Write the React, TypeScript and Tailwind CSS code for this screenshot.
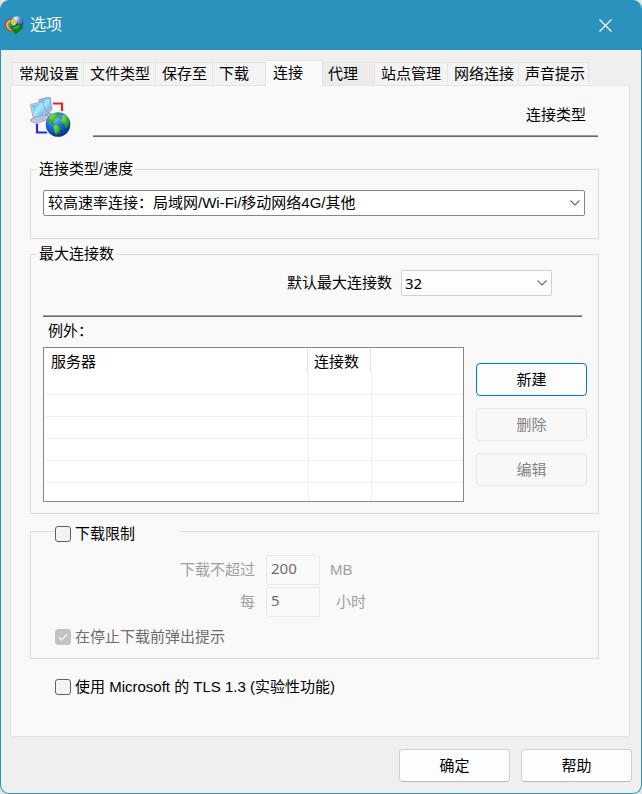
import { useState } from "react";
import type { ReactNode } from "react";

const tabs = [
  { label: "常规设置", width: "w-[71px]" },
  { label: "文件类型", width: "w-[72px]" },
  { label: "保存至", width: "w-[57px]" },
  { label: "下载", width: "w-[53px]" },
  { label: "连接", width: "w-[58px]" },
  { label: "代理", width: "w-[52px]" },
  { label: "站点管理", width: "w-[73px]" },
  { label: "网络连接", width: "w-[71px]" },
  { label: "声音提示", width: "w-[70px]" },
];

function AppLogo() {
  return (
    <svg viewBox="0 0 20 20" className="size-5 shrink-0" aria-hidden="true">
      <defs>
        <radialGradient id="logoBall" cx="0.4" cy="0.2" r="0.8">
          <stop offset="0" stopColor="#f0f4ff" />
          <stop offset="0.4" stopColor="#6a8fdc" />
          <stop offset="1" stopColor="#1c3a8c" />
        </radialGradient>
      </defs>
      <path d="M9 4C4 3.500 1 6.500 1.500 10.500c.5 3 3.500 5 7.500 5" fill="none" stroke="#d8401e" strokeWidth="1.600" />
      <path d="M9 5.500C5 5 2.600 8 3 10.500c.5 2 3 3.800 6 3.800" fill="none" stroke="#f6d02a" strokeWidth="1.600" />
      <path d="M9 7C6 7 4.300 8.500 4.500 10.500c.3 1.500 2 2.500 4.500 2.500" fill="none" stroke="#4ab84a" strokeWidth="1.500" />
      <circle cx="13" cy="7.500" r="6.500" fill="url(#logoBall)" />
      <path d="M7.500 5l3-1 2 2-.5 3-2.500 2-2.500-2.500z" fill="#d9cf3c" />
      <path d="M5.500 12.500l6.500-1.500 1.500-2.500 5.500 4-7.500 6.500-1-3z" fill="#108a14" stroke="#064d09" strokeWidth="0.600" />
      <path d="M8 12.800l5-1.200 1.200-1.600 1.500 1-3.700 2.500z" fill="#45c63a" />
    </svg>
  );
}

function ConnectionArt() {
  return (
    <svg viewBox="0 0 41 41" className="size-[41px] shrink-0" aria-hidden="true">
      <defs>
        <linearGradient id="screen" x1="0" y1="0" x2="1" y2="1">
          <stop offset="0" stopColor="#3fb4f4" />
          <stop offset="0.5" stopColor="#a8ecff" />
          <stop offset="1" stopColor="#4aa8f0" />
        </linearGradient>
        <radialGradient id="globe" cx="0.35" cy="0.25" r="0.8">
          <stop offset="0" stopColor="#8fd0ff" />
          <stop offset="0.45" stopColor="#1f74dc" />
          <stop offset="1" stopColor="#062a78" />
        </radialGradient>
        <radialGradient id="land" cx="0.35" cy="0.25" r="0.9">
          <stop offset="0" stopColor="#6fe04c" />
          <stop offset="1" stopColor="#0d7a1c" />
        </radialGradient>
      </defs>
      <path d="M23 6.500h9v7.500" fill="none" stroke="#d42a2a" strokeWidth="2.200" />
      <path d="M7 27v8.500h10" fill="none" stroke="#2c2cd8" strokeWidth="2.200" />
      <path d="M9 2.500L20 0l2 12.500-3 3-8-1z" fill="#a9b4da" stroke="#7f8bb8" strokeWidth="0.700" />
      <path d="M10.500 3.500L19 1.500l1.500 10-8 2z" fill="url(#screen)" />
      <path d="M12 18l8-2 4 2-3 3-7 1z" fill="#b9bddb" stroke="#7379a4" strokeWidth="0.700" />
      <path d="M0.500 7.500L13 4.500l3 13.500-12.500 4z" fill="#ccd4ec" stroke="#7f8bb8" strokeWidth="0.700" />
      <path d="M2 8.500L12 6l2.500 11-10 3z" fill="url(#screen)" />
      <path d="M0.500 22.500l4-2 10-2.500 4.500 2-1 2-11 4.500-6-2z" fill="#d3d6ea" stroke="#7379a4" strokeWidth="0.700" />
      <path d="M3 23l11-3M5 24.500l11-3.500" stroke="#8a90b8" strokeWidth="0.600" />
      <circle cx="28" cy="27.500" r="12.300" fill="url(#globe)" />
      <path d="M18 22c2-4 6-6.500 10.500-6.300l1 1.800-2 1 1.500 1.500-3.500 2-1 2.500-2 .5 2 2.500-1 1-4-3.500-1.500 1z" fill="url(#land)" />
      <path d="M31 18l4-.5c3 2.500 4.500 5.500 4.500 9.500l-2 4-2.500-.5-.5-3.500-3.500-1-1-3 2.500-2z" fill="url(#land)" />
      <path d="M23 28l3.500-.5 4 3-1 4.500-3 3-2-2.500z" fill="url(#land)" />
    </svg>
  );
}

function Chevron() {
  return (
    <svg viewBox="0 0 12 8" className="pointer-events-none absolute right-[4px] top-1/2 h-2 w-3 -translate-y-1/2" aria-hidden="true">
      <path d="M1.500 1.500L6 6l4.500-4.500" fill="none" stroke="#6a6a6a" strokeWidth="1.100" />
    </svg>
  );
}

function Rule() {
  return <div className="h-[2px] border-t border-[#a0a0a0] bg-[#696969]" />;
}

function PushButton({ children, primary, disabled }: { children: ReactNode; primary?: boolean; disabled?: boolean }) {
  const look = primary
    ? "border-[#0078d4] bg-[#fdfdfd]"
    : disabled
      ? "border-[#e8e8e8] bg-[#f8f8f8] text-[#838383]"
      : "border-[#d0d0d0] border-b-[#bababa] bg-[#fdfdfd]";
  return (
    <button type="button" disabled={disabled} className={`h-[33px] w-[111px] rounded-[4px] border ${look}`}>
      {children}
    </button>
  );
}

function CheckBox({ id, checked, disabled, onChange, children }: {
  id: string;
  checked: boolean;
  disabled?: boolean;
  onChange?: () => void;
  children: ReactNode;
}) {
  return (
    <div className="flex items-center gap-[4px]">
      <span className="relative flex size-4 shrink-0">
        <input
          id={id}
          type="checkbox"
          checked={checked}
          disabled={disabled}
          onChange={onChange}
          className="size-4 appearance-none rounded-[3px] border border-[#606060] bg-[#f3f3f3] checked:bg-[#0067c0] disabled:border-[#c3c3c3] disabled:bg-[#c3c3c3]"
        />
        {checked && (
          <svg viewBox="0 0 16 16" className="pointer-events-none absolute inset-0 size-4" aria-hidden="true">
            <path d="M4 8.500l2.500 2.500L12 5.500" fill="none" stroke="#fff" strokeWidth="1.200" />
          </svg>
        )}
      </span>
      <label htmlFor={id} className={disabled ? "text-[#6d6d6d]" : ""}>{children}</label>
    </div>
  );
}

export default function App() {
  const [limit, setLimit] = useState(false);
  const [tls, setTls] = useState(false);
  const limitInput =
    "ml-[11px] h-[30px] w-[54px] rounded-[2px] border border-[#ebebeb] bg-[#fafafa] px-1 pb-[5px] font-['Noto_Sans'] text-[15px] text-[#6d6d6d]";

  return (
    <div className="bg-[#e4e4e4] font-['Liberation_Sans','Noto_Sans_CJK_SC',sans-serif] text-[15px] leading-[18px] text-black">
      <div className="overflow-hidden rounded-[9px] border-x border-b border-[#2992bd] bg-[#efefef]">
        <header className="flex h-[50px] items-center bg-[#2992bd] pl-[3px] pr-[29px] text-white">
          <AppLogo />
          <h1 className="ml-[6px] flex-1 text-[16px]">选项</h1>
          <button type="button" aria-label="关闭" className="size-[13px]">
            <svg viewBox="0 0 13 13" className="size-[13px]" aria-hidden="true">
              <path d="M0.500 0.500l12 12M12.500 0.500l-12 12" stroke="#fff" strokeWidth="1.200" />
            </svg>
          </button>
        </header>

        <main className="pl-[9px] pr-[11px] pt-[10px]">
          <div role="tablist" className="flex items-end pl-[2px]">
            {tabs.map((tab, i) => {
              const active = tab.label === "连接";
              return (
                <button
                  key={tab.label}
                  type="button"
                  role="tab"
                  aria-selected={active}
                  className={`shrink-0 whitespace-nowrap border-t border-[#e4e4e4] text-left ${tab.width} ${
                    active
                      ? "-mb-px h-[26px] border-x bg-[#f9f9f9] pb-[2px] pl-[7px]"
                      : i < 4
                        ? "h-[23px] border-l bg-[#f3f3f3] pl-[6px]"
                        : i === 5
                          ? "h-[23px] border-r bg-[#ececec] pl-[5px]"
                          : "h-[23px] border-r bg-[#f3f3f3] pl-[6px]"
                  }`}
                >
                  {tab.label}
                </button>
              );
            })}
          </div>

          <section className="border border-[#e4e4e4] bg-[#f9f9f9] pb-[40px] pl-[19px] pr-[30px] pt-[11px]">
            <div className="flex h-[40px] pr-px">
              <ConnectionArt />
              <div className="ml-[22px] flex flex-1 flex-col justify-between pt-[9px]">
                <h2 className="pr-[12px] text-right">连接类型</h2>
                <Rule />
              </div>
            </div>

            <fieldset className="mt-[23px] border border-[#dcdcdc] pb-[22px] pl-[12px] pr-[13px]">
              <legend className="ml-[-6px] px-[2px]">连接类型/速度</legend>
              <div className="relative mt-[12px]">
                <select aria-label="连接类型/速度" className="block h-[26px] w-full appearance-none rounded-[2px] border border-[#868686] bg-white pl-[4px] pr-6">
                  <option>较高速率连接：局域网/Wi-Fi/移动网络4G/其他</option>
                </select>
                <Chevron />
              </div>
            </fieldset>

            <fieldset className="mt-[6px] border border-[#dcdcdc] pb-[11px] pl-[12px] pr-[11px]">
              <legend className="ml-[-6px] px-[2px]">最大连接数</legend>
              <div className="mt-[7px] flex items-center justify-end gap-[9px] pr-[35px]">
                <label htmlFor="max">默认最大连接数</label>
                <div className="relative w-[151px]">
                  <select id="max" className="block h-[26px] w-full appearance-none rounded-[2px] border border-[#d0d0d0] bg-[#fdfdfd] pl-[3px] pr-6 font-['Noto_Sans'] text-[15px]">
                    <option>32</option>
                  </select>
                  <Chevron />
                </div>
              </div>
              <div className="mb-[5px] mr-[5px] mt-[19px]">
                <Rule />
              </div>
              <p className="pl-[5px]">例外：</p>
              <div className="mt-[7px] flex gap-[12px]">
                <div className="h-[155px] flex-1 overflow-hidden border border-[#828790] bg-white">
                  <table className="w-full table-fixed border-separate border-spacing-0">
                    <colgroup>
                      <col className="w-[265px]" />
                      <col className="w-[63px]" />
                      <col />
                    </colgroup>
                    <thead>
                      <tr className="h-[25px] text-left">
                        <th className="p-0 pr-px font-normal">
                          <div className="h-[25px] border-r border-[#e5e5e5] pl-[7px] pt-[5px]">服务器</div>
                        </th>
                        <th className="p-0 pr-px font-normal">
                          <div className="h-[25px] border-r border-[#e5e5e5] pl-[5px] pt-[5px]">连接数</div>
                        </th>
                        <th className="p-0" />
                      </tr>
                    </thead>
                    <tbody>
                      {[0, 1, 2, 3, 4, 5].map((row) => (
                        <tr key={row} className="h-[22px]">
                          <td className="border-b border-r border-[#f0f0f0] p-0" />
                          <td className="border-b border-r border-[#f0f0f0] p-0" />
                          <td className="border-b border-[#f0f0f0] p-0" />
                        </tr>
                      ))}
                    </tbody>
                  </table>
                </div>
                <div className="flex flex-col gap-[12px] pt-[16px]">
                  <PushButton primary>新建</PushButton>
                  <PushButton disabled>删除</PushButton>
                  <PushButton disabled>编辑</PushButton>
                </div>
              </div>
            </fieldset>

            <fieldset className="mt-[5px] border border-[#dcdcdc] pb-[12px]">
              <legend className="ml-[24px] w-[124px] pt-[6px]">
                <CheckBox id="limit" checked={limit} onChange={() => setLimit(!limit)}>下载限制</CheckBox>
              </legend>
              <div className="mt-[12px] flex items-center text-[#a0a0a0]">
                <label htmlFor="size" className="w-[224px] text-right">下载不超过</label>
                <input id="size" defaultValue="200" disabled={!limit} className={limitInput} />
                <span className="ml-[10px]">MB</span>
              </div>
              <div className="mt-[2px] flex items-center text-[#a0a0a0]">
                <label htmlFor="hours" className="w-[224px] text-right">每</label>
                <input id="hours" defaultValue="5" disabled={!limit} className={limitInput} />
                <span className="ml-[16px]">小时</span>
              </div>
              <div className="ml-[24px] mt-[11px]">
                <CheckBox id="warn" checked disabled>在停止下载前弹出提示</CheckBox>
              </div>
            </fieldset>

            <div className="ml-[25px] mt-[19px]">
              <CheckBox id="tls" checked={tls} onChange={() => setTls(!tls)}>使用 Microsoft 的 TLS 1.3 (实验性功能)</CheckBox>
            </div>
          </section>
        </main>

        <footer className="flex justify-end gap-[11px] pb-[11px] pr-[9px] pt-[12px]">
          <PushButton>确定</PushButton>
          <PushButton>帮助</PushButton>
        </footer>
      </div>
    </div>
  );
}
